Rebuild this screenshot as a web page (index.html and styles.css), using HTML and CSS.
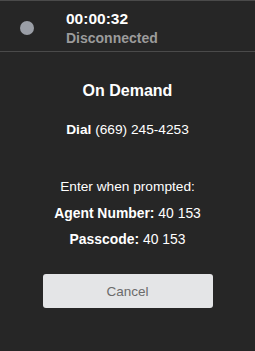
FILE: index.html
```html
<!DOCTYPE html>
<html>
<head>
<meta charset="utf-8">
<link rel="stylesheet" href="styles.css">
</head>
<body>
<div class="panel">
  <header class="status">
    <span class="dot"></span>
    <div class="status-text">
      <div class="time">00:00:32</div>
      <div class="state">Disconnected</div>
    </div>
  </header>
  <main class="content">
    <h1 class="title">On Demand</h1>
    <p class="dial"><b>Dial</b> (669) 245-4253</p>
    <p class="prompt">Enter when prompted:</p>
    <p class="line"><b>Agent Number:</b> 40 153</p>
    <p class="line"><b>Passcode:</b> 40 153</p>
    <button class="cancel">Cancel</button>
  </main>
</div>
</body>
</html>
```
FILE: styles.css
```css
html, body {
  margin: 0;
  padding: 0;
  background: #262626;
}
body {
  font-family: "Liberation Sans", Arial, sans-serif;
  color: #ffffff;
  width: 255px;
  height: 351px;
  overflow: hidden;
}
.panel {
  border-top: 1px solid #4a4a4a;
}
.status {
  display: flex;
  align-items: flex-start;
  height: 51px;
  border-bottom: 1px solid #4a4a4a;
  box-sizing: border-box;
}
.dot {
  width: 14px;
  height: 14px;
  border-radius: 50%;
  background: #9a9ea6;
  margin-left: 20px;
  margin-right: 32px;
  margin-top: 20px;
}
.status-text {
  display: flex;
  flex-direction: column;
  margin-top: 9px;
}
.time {
  font-size: 15.5px;
  font-weight: bold;
  line-height: 18px;
}
.state {
  margin-top: 2px;
  font-size: 14px;
  font-weight: bold;
  color: #9b9b9b;
  line-height: 16px;
}
.content {
  display: flex;
  flex-direction: column;
  align-items: center;
  padding-top: 30px;
}
.title {
  margin: 0;
  font-size: 16px;
  font-weight: bold;
  line-height: 18px;
}
.dial {
  margin: 22px 0 0;
  font-size: 13.7px;
  line-height: 16px;
}
.prompt {
  margin: 41px 0 0;
  font-size: 13.7px;
  line-height: 16px;
}
.line {
  margin: 10px 0 0;
  font-size: 13.9px;
  line-height: 16px;
}
.cancel {
  margin-top: 27px;
  width: 170px;
  height: 34px;
  border: none;
  border-radius: 3px;
  background: #e4e5e7;
  color: #6b6b6b;
  font-family: "Liberation Sans", Arial, sans-serif;
  font-size: 13.5px;
}
```
